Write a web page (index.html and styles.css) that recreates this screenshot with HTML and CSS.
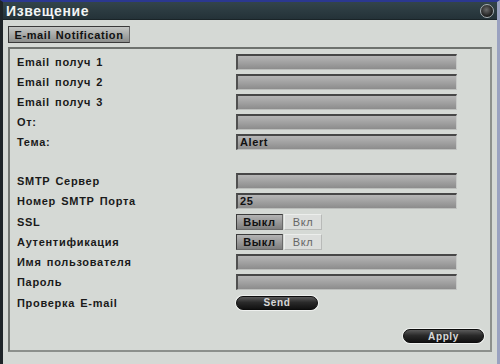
FILE: index.html
```html
<!DOCTYPE html>
<html lang="ru">
  <head>
    <meta charset="UTF-8" />
    <meta name="viewport" content="width=device-width, initial-scale=1.0" />
    <title>Извещение</title>
    <link rel="stylesheet" href="styles.css">
  </head>
  <body>
    <div class="window">
      <div class="titlebar">
        <span class="title">Извещение</span>
        <span class="close"></span>
      </div>

      <div class="content">
        <div class="tab">E-mail Notification</div>

        <div class="box">
          <div class="group">
            <div class="row">
              <span class="label">Email получ 1</span>
              <div class="field"></div>
            </div>
            <div class="row">
              <span class="label">Email получ 2</span>
              <div class="field"></div>
            </div>
            <div class="row">
              <span class="label">Email получ 3</span>
              <div class="field"></div>
            </div>
            <div class="row">
              <span class="label">От:</span>
              <div class="field"></div>
            </div>
            <div class="row">
              <span class="label">Тема:</span>
              <div class="field">Alert</div>
            </div>
          </div>

          <div class="group group-smtp">
            <div class="row">
              <span class="label">SMTP Сервер</span>
              <div class="field"></div>
            </div>
            <div class="row">
              <span class="label">Номер SMTP Порта</span>
              <div class="field">25</div>
            </div>
            <div class="row">
              <span class="label">SSL</span>
              <div class="toggle">
                <span class="opt opt-on">Выкл</span>
                <span class="opt">Вкл</span>
              </div>
            </div>
            <div class="row">
              <span class="label">Аутентификация</span>
              <div class="toggle">
                <span class="opt opt-on">Выкл</span>
                <span class="opt">Вкл</span>
              </div>
            </div>
            <div class="row">
              <span class="label">Имя пользователя</span>
              <div class="field"></div>
            </div>
            <div class="row">
              <span class="label">Пароль</span>
              <div class="field"></div>
            </div>
            <div class="row">
              <span class="label">Проверка E-mail</span>
              <button class="pill send">Send</button>
            </div>
          </div>

          <div class="footer">
            <button class="pill apply">Apply</button>
          </div>
        </div>
      </div>
    </div>
  </body>
</html>
```

FILE: styles.css
```css
* {
  margin: 0;
  padding: 0;
  box-sizing: border-box;
  font-family: "Liberation Sans", Arial, sans-serif;
}

body {
  background-color: #1c2226;
  width: 500px;
  height: 364px;
  overflow: hidden;
}

.window {
  width: 500px;
  height: 364px;
  background-color: #d5d9d5;
  border-left: 3px solid #1e2428;
  border-right: 3px solid #9aa2c0;
  border-top: 2px solid #2b3890;
  display: flex;
  flex-direction: column;
}

.titlebar {
  height: 18px;
  background: linear-gradient(#33444a, #243238);
  border-bottom: 1px solid #1a2428;
  display: flex;
  justify-content: space-between;
  align-items: center;
  padding: 0 3px 0 3px;
}

.title {
  color: #f2f4f4;
  font-size: 14px;
  font-weight: bold;
  letter-spacing: 0.6px;
}

.close {
  width: 14px;
  height: 14px;
  border-radius: 50%;
  background: radial-gradient(circle at 45% 40%, #6a6a6a, #1a1a1a 70%);
  border: 1px solid #a8b0b4;
}

.content {
  flex: 1;
  padding: 6px 2px 0 5px;
  display: flex;
  flex-direction: column;
}

.tab {
  width: 122px;
  height: 17px;
  background: linear-gradient(#c4c6c4, #8c8e8c);
  border: 1px solid #3a3a3a;
  border-right-color: #6a6a6a;
  color: #111;
  font-size: 11px;
  font-weight: bold;
  letter-spacing: 0.6px;
  word-spacing: 1px;
  display: flex;
  align-items: center;
  justify-content: center;
  margin-bottom: 4px;
}

.box {
  width: 484px;
  height: 305px;
  border: 2px solid #8c908c;
  border-top-color: #6e726e;
  border-left-color: #747874;
  padding: 5px 6px 7px 7px;
  display: flex;
  flex-direction: column;
}

.group {
  display: flex;
  flex-direction: column;
  gap: 4px;
}

.group-smtp {
  margin-top: 23px;
  gap: 4.3px;
}

.row {
  height: 16px;
  display: flex;
  align-items: center;
}

.label {
  width: 219px;
  color: #1a1a1a;
  font-size: 11px;
  font-weight: bold;
  letter-spacing: 0.7px;
  word-spacing: 1.5px;
}

.field {
  width: 221px;
  height: 16px;
  background: linear-gradient(#b6b6b6, #8c8c8c);
  border-top: 2px solid #474747;
  border-left: 2px solid #505050;
  border-right: 1px solid #c6c8c6;
  border-bottom: 1px solid #bcbebc;
  color: #111;
  font-size: 11px;
  font-weight: bold;
  letter-spacing: 0.6px;
  padding-left: 2px;
  line-height: 12px;
}

.toggle {
  display: flex;
  height: 16px;
}

.opt {
  width: 38px;
  display: flex;
  align-items: center;
  justify-content: center;
  color: #666;
  font-size: 11px;
  letter-spacing: 0.6px;
  background-color: #dcdedc;
  border: 1px solid #eceeec;
  border-right-color: #b8bab8;
  border-bottom-color: #b8bab8;
  margin-left: 1px;
}

.opt-on {
  width: 47px;
  margin-left: 0;
  color: #111;
  font-weight: bold;
  background: linear-gradient(#b4b4b4, #7e7e7e);
  border: 1px solid #3c3c3c;
  border-right-color: #6a6a6a;
  border-bottom-color: #6a6a6a;
}

.pill {
  height: 14px;
  border-radius: 8px;
  background: linear-gradient(#5a5a5a, #2a2a2a 45%, #111);
  border: 1px solid #0c0c0c;
  box-shadow: 0 0 0 1px #eef0ee;
  color: #d8d8d8;
  font-size: 10px;
  font-weight: bold;
  letter-spacing: 0.6px;
  cursor: pointer;
}

.send {
  width: 82px;
}

.footer {
  margin-top: auto;
  display: flex;
  justify-content: flex-end;
}

.apply {
  width: 81px;
}
```
